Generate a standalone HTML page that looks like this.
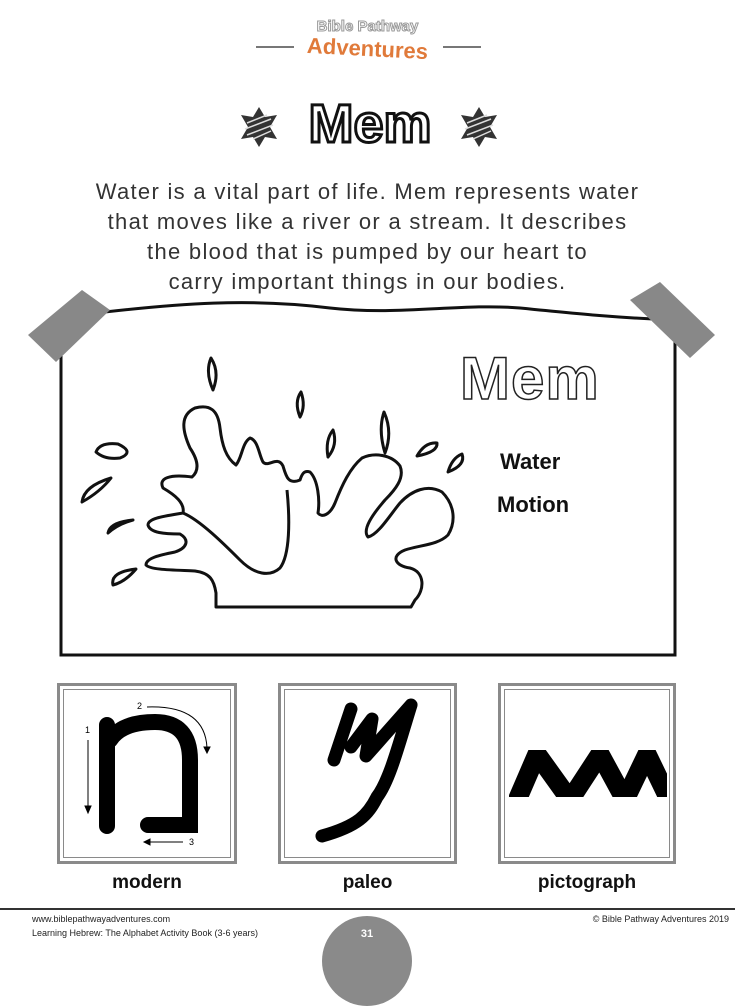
<!DOCTYPE html>
<html><head><meta charset="utf-8"><style>
body{margin:0;width:735px;height:961px;background:#fff;position:relative;overflow:hidden;font-family:"Liberation Sans",sans-serif}
.a{position:absolute}
.para{left:0;width:735px;top:177px;text-align:center;font-size:22px;line-height:30px;color:#333;letter-spacing:1.3px}
.fr{position:absolute;border:3px solid #8a8a8a;box-sizing:border-box}
.fr::after{content:"";position:absolute;left:3px;top:3px;right:3px;bottom:3px;border:1.5px solid #8a8a8a}
.lab{position:absolute;top:872px;font-size:19px;font-weight:bold;color:#111;text-align:center}
</style></head><body>
<div class="a" style="left:256px;top:46px;width:38px;height:2px;background:#777"></div>
<div class="a" style="left:443px;top:46px;width:38px;height:2px;background:#777"></div>
<div class="a" style="left:300px;top:18px;width:135px;text-align:center;font-size:15px;color:#fff;-webkit-text-stroke:1px #999;font-weight:bold">Bible Pathway</div>
<div class="a" style="left:290px;top:36px;width:155px;text-align:center;font-size:22px;color:#e07a3a;font-weight:bold;transform:rotate(3deg)">Adventures</div>
<div class="a" style="left:235px;top:93px;width:270px;text-align:center;font-size:54px;font-weight:bold;color:#fff;-webkit-text-stroke:3px #111">Mem</div>
<svg class="a" style="left:236px;top:104px" width="46" height="46" viewBox="-23 -23 46 46"><polygon points="0,-20 6,-10 18,-12 11,0 18,12 6,10 0,20 -6,10 -18,12 -11,0 -18,-12 -6,-10" fill="#333"/><path d="M-12,-4 L8,-12 M-14,2 L12,-8 M-12,8 L14,-2 M-6,12 L12,4" stroke="#ddd" stroke-width="1.5"/></svg>
<svg class="a" style="left:456px;top:104px" width="46" height="46" viewBox="-23 -23 46 46"><polygon points="0,-20 6,-10 18,-12 11,0 18,12 6,10 0,20 -6,10 -18,12 -11,0 -18,-12 -6,-10" fill="#333"/><path d="M-12,-4 L8,-12 M-14,2 L12,-8 M-12,8 L14,-2 M-6,12 L12,4" stroke="#ddd" stroke-width="1.5"/></svg>
<div class="a para">Water is a vital part of life. Mem represents water<br>that moves like a river or a stream. It describes<br>the blood that is pumped by our heart to<br>carry important things in our bodies.</div>
<svg class="a" style="left:0;top:0" width="735" height="961">
<path d="M88,314 C180,303 250,298 330,308 C400,316 460,303 520,308 C580,314 620,318 675,320 L675,655 L61,655 L61,330" fill="none" stroke="#111" stroke-width="3"/>
<polygon points="28,335 82,290 110,310 56,362" fill="#888"/>
<polygon points="630,300 660,282 715,335 690,358" fill="#888"/>
<g fill="none" stroke="#111" stroke-width="3" stroke-linejoin="round">
<path d="M216,607 L216,593 C214,580 210,573 195,571 C175,570 150,570 146,565 C146,558 160,555 175,552 C187,548 190,540 180,534 C165,534 150,533 148,525 C148,518 165,516 183,513 C185,503 175,495 163,488 C158,478 170,474 192,477 C200,470 198,460 190,448 C182,430 180,415 195,408 C210,404 218,410 220,428 C222,445 226,458 236,465 C242,458 242,443 250,438 C258,440 259,455 263,462 C268,468 278,455 283,466 C286,476 288,485 300,480 C302,474 304,470 310,472 C318,480 320,500 318,513 C322,518 330,515 335,503 C342,485 350,468 362,458 C375,452 392,455 400,466 C405,478 395,490 385,500 C372,515 362,530 368,537 C378,535 390,515 400,503 C412,490 428,484 442,492 C455,505 456,522 448,535 C438,545 420,545 405,550 C390,556 395,566 410,568 C425,572 425,590 415,600 L411,607 Z"/>
<path d="M183,513 C200,520 225,545 240,560 C255,575 270,577 280,568 C290,555 290,520 287,490"/>
<path d="M213,390 Q205,372 211,358 Q220,372 213,390 Z"/>
<path d="M300,417 Q294,402 301,392 Q306,406 300,417 Z"/>
<path d="M328,457 Q325,440 333,430 Q338,445 328,457 Z"/>
<path d="M385,453 Q378,430 384,412 Q393,432 385,453 Z"/>
<path d="M417,456 Q425,442 437,443 Q438,452 417,456 Z"/>
<path d="M448,472 Q452,458 462,454 Q466,465 448,472 Z"/>
<path d="M96,452 Q100,442 118,444 Q135,452 120,458 Q105,460 96,452 Z"/>
<path d="M82,502 Q84,486 111,478 Q100,492 82,502 Z"/>
<path d="M108,533 Q110,522 133,520 Q118,524 108,533 Z"/>
<path d="M113,585 Q110,572 136,569 Q125,582 113,585 Z"/>
</g>
</svg>
<div class="a" style="left:460px;top:344px;font-size:60px;font-weight:bold;color:#fff;-webkit-text-stroke:1.5px #222;letter-spacing:1px">Mem</div>
<div class="a" style="left:500px;top:449px;font-size:22px;font-weight:bold;color:#111">Water</div>
<div class="a" style="left:497px;top:492px;font-size:22px;font-weight:bold;color:#111">Motion</div>
<div class="fr" style="left:57px;top:683px;width:180px;height:181px"></div>
<div class="fr" style="left:278px;top:683px;width:179px;height:181px"></div>
<div class="fr" style="left:498px;top:683px;width:178px;height:181px"></div>
<svg class="a" style="left:0;top:0" width="735" height="961">
<path d="M107,725 L107,826 M148,825 L190,825 L190,760 Q190,722 155,722 Q122,722 110,740" stroke="#000" stroke-width="16" fill="none" stroke-linecap="round"/>
<g stroke="#000" stroke-width="1" fill="#000" font-size="9" font-family="Liberation Sans">
<line x1="88" y1="740" x2="88" y2="808"/><polygon points="85,806 91,806 88,813"/><text x="85" y="733" stroke="none">1</text>
<path d="M147,707 Q205,705 207,748" fill="none"/><polygon points="204,747 210,747 207,753"/><text x="137" y="709" stroke="none">2</text>
<line x1="150" y1="842" x2="183" y2="842"/><polygon points="150,839 150,845 144,842"/><text x="189" y="845" stroke="none">3</text>
</g>
<path d="M351,709 L334,760 M351,747 L372,719 L366,756 L411,705 C400,740 390,780 377,797 C368,815 358,826 322,836" stroke="#000" stroke-width="13" fill="none" stroke-linecap="round" stroke-linejoin="round"/>
<clipPath id="c"><rect x="509" y="750" width="158" height="47"/></clipPath>
<polyline clip-path="url(#c)" points="512,812 537,754 570,800 600,754 625,800 647,754 675,812" fill="none" stroke="#000" stroke-width="19" stroke-linejoin="miter" stroke-miterlimit="10"/>
</svg>
<div class="lab" style="left:57px;width:180px">modern</div>
<div class="lab" style="left:278px;width:179px">paleo</div>
<div class="lab" style="left:498px;width:178px">pictograph</div>
<div class="a" style="left:0;top:908px;width:735px;height:1.5px;background:#333"></div>
<div class="a" style="left:32px;top:912px;font-size:9px;color:#222;line-height:14px">www.biblepathwayadventures.com<br>Learning Hebrew: The Alphabet Activity Book (3-6 years)</div>
<div class="a" style="right:6px;top:914px;font-size:9px;color:#222">© Bible Pathway Adventures 2019</div>
<div class="a" style="left:322px;top:916px;width:90px;height:90px;border-radius:50%;background:#8a8a8a;color:#fff;text-align:center;font-size:11px;font-weight:bold;line-height:36px">31</div>
</body></html>
